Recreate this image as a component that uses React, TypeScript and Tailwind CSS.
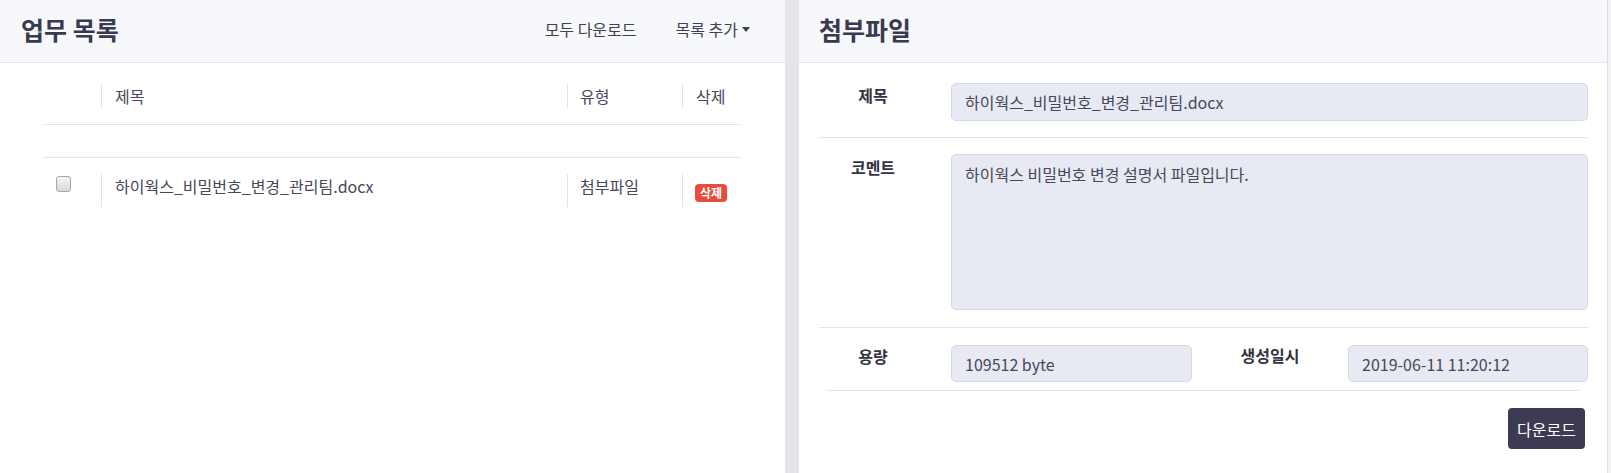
import React from "react";

const font = "font-['Noto_Sans_CJK_KR','Noto_Sans',sans-serif]";

function Caret() {
  return (
    <svg width="8" height="5" viewBox="0 0 8 5" className="ml-[4px] mt-[1px]">
      <path d="M0 0 L8 0 L4 5 Z" fill="#3f4052" />
    </svg>
  );
}

function Field({ label, pt, children }: { label: string; pt: string; children: React.ReactNode }) {
  return (
    <>
      <div className={`w-[108px] shrink-0 ${pt} text-center text-[16px] font-bold leading-[20px] text-[#33343f]`}>
        {label}
      </div>
      <div className="ml-[24px] flex-1">{children}</div>
    </>
  );
}

export default function App() {
  return (
    <div className={`${font} flex h-[473px] w-[1611px] bg-[#e4e5eb] text-[#3f4050]`}>
      {/* Left panel */}
      <div className="flex w-[785px] shrink-0 flex-col bg-white">
        <div className="flex h-[63px] shrink-0 items-center justify-between border-b border-[#e3e5ee] bg-[#f7f8fc] pb-[4px] pl-[21px] pr-[35px]">
          <div className="text-[25px] font-bold leading-[30px] text-[#383a4e]">업무 목록</div>
          <div className="flex items-center text-[16px] leading-[20px] text-[#3f4052]">
            <span>모두 다운로드</span>
            <span className="ml-[39px] flex items-center">
              목록 추가
              <Caret />
            </span>
          </div>
        </div>
        <div className="pl-[43px]">
          <div className="w-[698px] text-[16px] text-[#464757]">
            {/* header row */}
            <div className="flex h-[62px] border-b border-[#e3e4ea]">
              <div className="w-[58px] shrink-0" />
              <div className="mt-[21px] flex h-[24px] w-[466px] shrink-0 items-center border-l border-[#e3e4ea] pl-[13px] leading-[24px]">
                제목
              </div>
              <div className="mt-[21px] flex h-[24px] w-[115px] shrink-0 items-center border-l border-[#e3e4ea] pl-[12px] leading-[24px]">
                유형
              </div>
              <div className="mt-[21px] flex h-[24px] flex-1 items-center border-l border-[#e3e4ea] pl-[13px] leading-[24px]">
                삭제
              </div>
            </div>
            {/* empty row */}
            <div className="h-[33px] border-b border-[#e3e4ea]" />
            {/* data row */}
            <div className="flex h-[60px]">
              <div className="w-[58px] shrink-0 pl-[13px] pt-[18px]">
                <div className="h-[16px] w-[15px] rounded-[3px] border border-[#a6a6a6] bg-linear-to-b from-[#f4f4f4] to-[#d9d9d9]" />
              </div>
              <div className="mt-[16px] h-[33px] w-[466px] shrink-0 border-l border-[#e3e4ea] pl-[13px] leading-[24px]">
                하이웍스_비밀번호_변경_관리팀.docx
              </div>
              <div className="mt-[16px] h-[33px] w-[115px] shrink-0 border-l border-[#e3e4ea] pl-[12px] leading-[24px]">
                첨부파일
              </div>
              <div className="mt-[16px] h-[33px] flex-1 border-l border-[#e3e4ea] pl-[12px] pt-[5px]">
                <span className="inline-flex h-[18px] w-[32px] items-center justify-center rounded-[4px] bg-[#e74c3c] text-[12px] font-bold leading-none text-white">
                  삭제
                </span>
              </div>
            </div>
          </div>
        </div>
      </div>

      {/* gap */}
      <div className="w-[14px] shrink-0" />

      {/* Right panel */}
      <div className="flex w-[809px] shrink-0 flex-col border-r border-[#dcdde3] bg-white">
        <div className="flex h-[63px] shrink-0 items-center border-b border-[#e3e5ee] bg-[#f7f8fc] pb-[4px] pl-[20px]">
          <div className="text-[25px] font-bold leading-[30px] text-[#383a4e]">첨부파일</div>
        </div>
        <div className="pl-[20px] pr-[19px] text-[16px] text-[#464757]">
          {/* title row */}
          <div className="flex border-b border-[#e3e4ea] pb-[16px] pt-[20px]">
            <Field label="제목" pt="pt-[2px]">
              <div className="flex h-[38px] items-center rounded-[5px] border border-[#d4d7e5] bg-[#e8eaf3] pl-[13px] leading-[20px]">
                하이웍스_비밀번호_변경_관리팀.docx
              </div>
            </Field>
          </div>
          {/* comment row */}
          <div className="flex border-b border-[#e3e4ea] pb-[17px] pt-[16px]">
            <Field label="코멘트" pt="pt-[3px]">
              <div className="h-[156px] rounded-[5px] border border-[#d4d7e5] bg-[#e8eaf3] pl-[13px] pt-[9px] leading-[21px]">
                하이웍스 비밀번호 변경 설명서 파일입니다.
              </div>
            </Field>
          </div>
          {/* size/date row */}
          <div className="flex pt-[17px]">
            <Field label="용량" pt="pt-[1px]">
              <div className="flex h-[37px] items-center rounded-[5px] border border-[#d4d7e5] bg-[#e8eaf3] pl-[13px] leading-[20px]">
                109512 byte
              </div>
            </Field>
            <div className="ml-[24px] w-[108px] shrink-0 text-center text-[16px] font-bold leading-[20px] text-[#33343f]">
              생성일시
            </div>
            <div className="ml-[24px] w-[240px] shrink-0">
              <div className="flex h-[37px] items-center rounded-[5px] border border-[#d4d7e5] bg-[#e8eaf3] pl-[13px] leading-[20px]">
                2019-06-11 11:20:12
              </div>
            </div>
          </div>
          <div className="mx-[8px] mt-[8px] border-b border-[#e3e4ea]" />
          <div className="flex justify-end pr-[3px] pt-[17px]">
            <button className="h-[41px] w-[77px] rounded-[4px] bg-[#3d3a53] text-[16px] text-white">
              다운로드
            </button>
          </div>
        </div>
      </div>
      <div className="flex-1 bg-[#f3f3f6]" />
    </div>
  );
}
